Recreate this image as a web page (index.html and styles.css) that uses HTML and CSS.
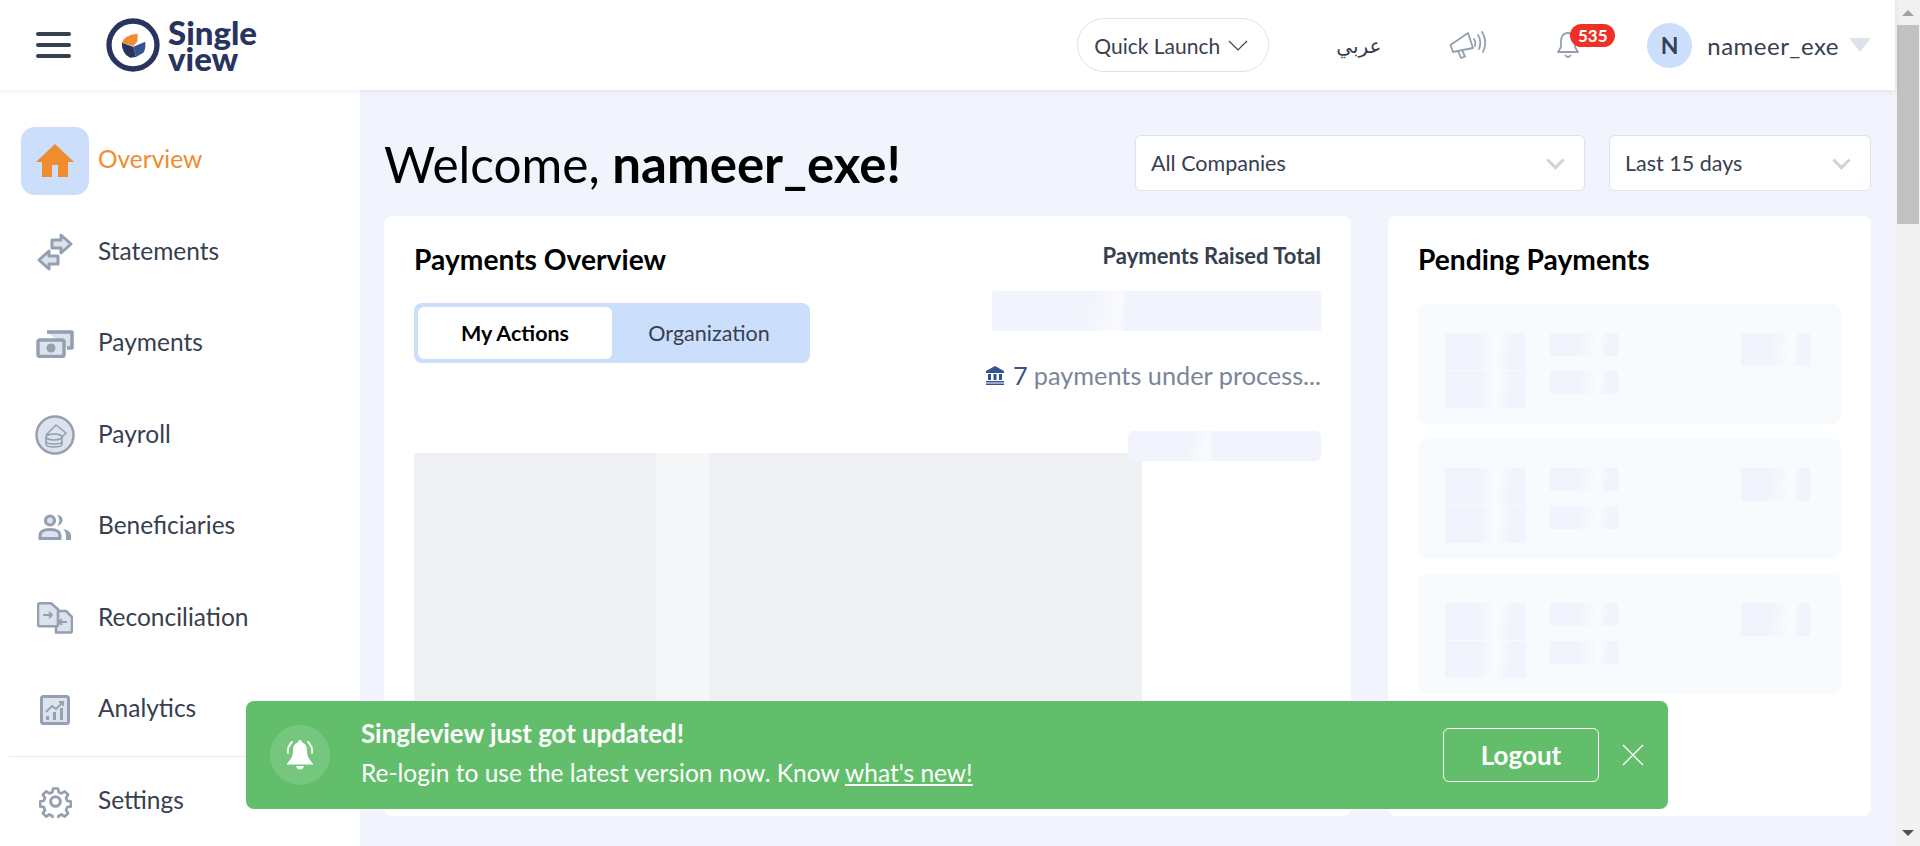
FILE: index.html
```html
<!DOCTYPE html>
<html lang="en">
  <head>
    <meta charset="UTF-8" />
    <title>Singleview</title>
    <link rel="stylesheet" href="styles.css">
  </head>
  <body>
    <div class="page">
      <header class="topbar">
        <div class="menu-btn"><span></span><span></span><span></span></div>
        <div class="logo">
          <svg class="logo-mark" viewBox="0 0 54 54">
            <circle cx="27" cy="27" r="24" fill="none" stroke="#28335f" stroke-width="5.300"/>
            <path d="M15.700 24.700Q18 17 31.700 15.700L31.300 23.700L27.300 28Z" fill="#ef8c2f"/>
            <path d="M15.700 24.700L27.300 28.700L30 39L24 39.700Q16 36 15.700 24.700Z" fill="#28335f"/>
            <path d="M27.300 28.700L39.300 23.700Q40 31 37.300 34.700L30 39Z" fill="#34548f"/>
          </svg>
          <div class="logo-text"><span>Single</span><span>view</span></div>
        </div>
        <div class="quick-launch">
          Quick Launch
          <svg width="20" height="11" viewBox="0 0 20 11"><path d="M1 1l9 9 9-9" fill="none" stroke="#36404f" stroke-width="1.2"/></svg>
        </div>
        <div class="lang" lang="ar">عربي</div>
        <svg class="megaphone" width="39" height="28" viewBox="0 0 39 28" fill="none" stroke="#94a0b2" stroke-width="1.800">
          <path d="M1.500 14L19 2l5 15-20 4z" stroke-linejoin="round"/>
          <path d="M9 20l3 7 4-1.500-3-6.500"/>
          <path d="M25 8q2 3 1 7M29 4q4 6 1 14M33 1q6 9 1 20" stroke-linecap="round"/>
        </svg>
        <div class="notify">
          <svg width="26" height="30" viewBox="0 0 26 30" fill="none" stroke="#94a0b2" stroke-width="1.800">
            <path d="M13 3c-5 0-7 4-7 8v6l-3 5h20l-3-5v-6c0-4-2-8-7-8z" stroke-linejoin="round"/>
            <path d="M10 25q3 4 6 0"/>
          </svg>
          <span class="badge">535</span>
        </div>
        <div class="user">
          <span class="avatar">N</span>
          <span class="user-name">nameer_exe</span>
          <span class="user-caret"></span>
        </div>
      </header>

      <div class="body-row">
        <aside class="sidebar">
          <nav class="nav">
            <a class="nav-item active">
              <span class="nav-icon">
                <svg width="38" height="33" viewBox="0 0 38 33"><path d="M19 0L38 18H32V33H22V21H16V33H6V18H0Z" fill="#ef8c2f"/></svg>
              </span>
              <span class="nav-label">Overview</span>
            </a>
            <a class="nav-item">
              <span class="nav-icon">
                <svg width="36" height="38" viewBox="0 0 36 38" fill="#dde3ec" stroke="#94a0b2" stroke-width="3" stroke-linejoin="round">
                  <path d="M15 7h9V2l10 9-10 9v-5h-9z"/>
                  <path d="M21 23h-9v-5L2 27l10 9v-5h9z"/>
                </svg>
              </span>
              <span class="nav-label">Statements</span>
            </a>
            <a class="nav-item">
              <span class="nav-icon">
                <svg width="38" height="28" viewBox="0 0 38 28">
                  <path d="M11 2h25v16h-5" fill="#dde3ec" stroke="#94a0b2" stroke-width="3.500" stroke-linejoin="round"/>
                  <rect x="2" y="10" width="26" height="16.500" rx="2" fill="#dde3ec" stroke="#94a0b2" stroke-width="3.500"/>
                  <circle cx="15" cy="18" r="4.500" fill="#94a0b2"/>
                </svg>
              </span>
              <span class="nav-label">Payments</span>
            </a>
            <a class="nav-item">
              <span class="nav-icon">
                <svg width="40" height="40" viewBox="0 0 40 40">
                  <circle cx="20" cy="20" r="18.500" fill="#dde3ec" stroke="#94a0b2" stroke-width="2.500"/>
                  <path d="M11 20l10-10 10 8-6 6" fill="none" stroke="#94a0b2" stroke-width="1.600" stroke-linejoin="round"/>
                  <ellipse cx="19" cy="22" rx="8" ry="3" fill="#dde3ec" stroke="#94a0b2" stroke-width="1.600"/>
                  <path d="M11 22v7c0 4 16 4 16 0v-7M11 26c0 4 16 4 16 0" fill="none" stroke="#94a0b2" stroke-width="1.600"/>
                </svg>
              </span>
              <span class="nav-label">Payroll</span>
            </a>
            <a class="nav-item">
              <span class="nav-icon">
                <svg width="34" height="26" viewBox="0 0 34 26" fill="#94a0b2">
                  <circle cx="12" cy="6.500" r="4.500" fill="#dde3ec" stroke="#94a0b2" stroke-width="3.200"/>
                  <path d="M2 24.500v-3c0-4 4-6 10-6s10 2 10 6v3z" fill="#dde3ec" stroke="#94a0b2" stroke-width="3.200" stroke-linejoin="round"/>
                  <path d="M19 1c7 0 8 9 0 11 3-3 3-8 0-11zM25 15c5 1 8 3 8 7v4h-5v-4c0-3-1-5-3-7z"/>
                </svg>
              </span>
              <span class="nav-label">Beneficiaries</span>
            </a>
            <a class="nav-item">
              <span class="nav-icon">
                <svg width="36" height="32" viewBox="0 0 36 32" fill="#dde3ec" stroke="#94a0b2" stroke-width="2.600" stroke-linejoin="round">
                  <path d="M19 30.500h14q2 0 2-2V15l-6-6h-8q-2 0-2 2z"/>
                  <path d="M3 1.300h11l7 6v15q0 2-2 2H3q-2 0-2-2v-19q0-2 2-2z"/>
                  <path d="M6 13h9M12 10l3 3-3 3M30 20h-8M25 17l-3 3 3 3" fill="none" stroke-width="1.800"/>
                </svg>
              </span>
              <span class="nav-label">Reconciliation</span>
            </a>
            <a class="nav-item">
              <span class="nav-icon">
                <svg width="30" height="30" viewBox="0 0 30 30">
                  <rect x="1.500" y="1.500" width="27" height="27" rx="2" fill="#dde3ec" stroke="#94a0b2" stroke-width="3"/>
                  <path d="M6 17l6-6 4 3 7-7M19 7h4v4" fill="none" stroke="#94a0b2" stroke-width="1.800"/>
                  <path d="M6 21h3v4H6zM13 17h3v8h-3zM20 13h3v12h-3z" fill="#94a0b2"/>
                </svg>
              </span>
              <span class="nav-label">Analytics</span>
            </a>
            <a class="nav-item settings">
              <span class="nav-icon">
                <svg width="33" height="33" viewBox="0 0 24 24" fill="none" stroke="#94a0b2" stroke-width="2.200" stroke-linejoin="round">
                  <circle cx="12" cy="12" r="3.500"/>
                  <path d="M10 1.500h4l.6 3 2.300 1 2.600-1.700 2.700 2.800-1.700 2.500 1 2.400 3 .5v4l-3 .6-1 2.300 1.700 2.600-2.800 2.700-2.500-1.700-2.400 1-.5 3h-4l-.6-3-2.300-1-2.600 1.700-2.700-2.800 1.700-2.500-1-2.400-3-.5v-4l3-.6 1-2.300-1.700-2.600 2.800-2.700 2.500 1.700 2.400-1z" transform="translate(1.200 1.200) scale(.9)"/>
                </svg>
              </span>
              <span class="nav-label">Settings</span>
            </a>
          </nav>
        </aside>

        <main class="main">
          <div class="title-row">
            <h1 class="welcome">Welcome, <b>nameer_exe!</b></h1>
            <div class="select select-company">All Companies <i class="chev"></i></div>
            <div class="select select-range">Last 15 days <i class="chev"></i></div>
          </div>

          <div class="cards">
            <section class="card">
              <div class="overview-top">
                <div>
                  <h2 class="card-title">Payments Overview</h2>
                  <div class="toggle">
                    <span class="toggle-btn on">My Actions</span>
                    <span class="toggle-btn">Organization</span>
                  </div>
                </div>
                <div class="stats">
                  <div class="stats-label">Payments Raised Total</div>
                  <div class="skeleton sk-total"></div>
                  <div class="stats-process">
                    <svg width="20" height="20" viewBox="0 0 20 20" fill="#34548f">
                      <path d="M10 1l9 5v2H1V6zM3 9h3v6H3zM8.500 9h3v6h-3zM14 9h3v6h-3zM1 16h18v1.500H1zM1 18.500h18V20H1z"/>
                    </svg>
                    <span class="count">7</span> payments under process...
                  </div>
                  <div class="skeleton sk-small"></div>
                </div>
              </div>
              <div class="chart-placeholder"></div>
            </section>

            <section class="card">
              <h2 class="card-title">Pending Payments</h2>
              <div class="pending-list">
                <div class="pending-row">
                  <div class="sk-col"><div class="skeleton sk-a"></div><div class="skeleton sk-a"></div></div>
                  <div class="sk-col spaced"><div class="skeleton sk-b"></div><div class="skeleton sk-b"></div></div>
                  <div class="skeleton sk-c"></div>
                </div>
                <div class="pending-row">
                  <div class="sk-col"><div class="skeleton sk-a"></div><div class="skeleton sk-a"></div></div>
                  <div class="sk-col spaced"><div class="skeleton sk-b"></div><div class="skeleton sk-b"></div></div>
                  <div class="skeleton sk-c"></div>
                </div>
                <div class="pending-row">
                  <div class="sk-col"><div class="skeleton sk-a"></div><div class="skeleton sk-a"></div></div>
                  <div class="sk-col spaced"><div class="skeleton sk-b"></div><div class="skeleton sk-b"></div></div>
                  <div class="skeleton sk-c"></div>
                </div>
              </div>
            </section>
          </div>
        </main>
      </div>

      <!-- update toast -->
      <div class="toast">
        <span class="toast-icon">
          <svg width="30" height="32" viewBox="0 0 30 32" fill="#fff">
            <path d="M15 1c1 0 2 1 2 2.500 4 1 5 4 5 9 0 5 3 9 6 12v1H2v-1c3-3 6-7 6-12 0-5 1-8 5-9C13 2 14 1 15 1z"/>
            <path d="M11 27h8q-1 3.500-4 3.500T11 27z"/>
            <path d="M7 3Q2 8 3 14M23 3q5 5 4 11" fill="none" stroke="#fff" stroke-width="1.800" stroke-linecap="round"/>
          </svg>
        </span>
        <div class="toast-text">
          <div class="toast-title">Singleview just got updated!</div>
          <div class="toast-msg">Re-login to use the latest version now. Know <a class="toast-link">what's new!</a></div>
        </div>
        <button class="toast-btn">Logout</button>
        <svg class="toast-close" width="22" height="22" viewBox="0 0 22 22"><path d="M1 1l20 20M21 1L1 21" stroke="#fff" stroke-width="1.400"/></svg>
      </div>
    </div>

    <div class="scrollbar">
      <span class="arrow up"></span>
      <div class="thumb"></div>
      <span class="arrow down"></span>
    </div>
  </body>
</html>
```

FILE: styles.css
```css
* {
  box-sizing: border-box;
}
html, body {
  height: 846px;
  overflow: hidden;
}
body {
  margin: 0;
  display: flex;
  font-family: "Lato", "DejaVu Sans", sans-serif;
  color: #36404f;
  background-color: #f1f4fc;
}
.page {
  flex: 1;
  position: relative;
  display: flex;
  flex-direction: column;
  min-width: 0;
}

/* top bar */
.topbar {
  height: 90px;
  flex: none;
  display: flex;
  align-items: center;
  padding: 0 24px 0 36px;
  background-color: #fff;
  box-shadow: 0 1px 6px rgba(60, 70, 110, 0.1);
  position: relative;
  z-index: 2;
}
.menu-btn {
  width: 35px;
  display: flex;
  flex-direction: column;
  gap: 7px;
}
.menu-btn span {
  height: 4px;
  border-radius: 2px;
  background-color: #36404f;
}
.logo {
  display: flex;
  align-items: center;
  margin-left: 35px;
  gap: 8px;
}
.logo-mark {
  width: 54px;
  height: 54px;
}
.logo-text {
  font-size: 33px;
  font-weight: 900;
  color: #28335f;
}
.logo-text span {
  display: block;
  height: 26px;
  line-height: 26px;
}
.quick-launch {
  margin-left: auto;
  width: 192px;
  height: 54px;
  display: flex;
  align-items: center;
  justify-content: center;
  gap: 8px;
  padding-right: 4px;
  font-size: 21px;
  border: 1px solid #dde3ec;
  border-radius: 27px;
}
.lang {
  margin-left: 67px;
  font-size: 20px;
  width: 44px;
  text-align: center;
}
.megaphone {
  margin-left: 69px;
}
.notify {
  margin-left: 67px;
  position: relative;
  width: 26px;
  height: 30px;
}
.badge {
  position: absolute;
  left: 15px;
  top: -6px;
  width: 45px;
  height: 23px;
  border-radius: 12px;
  background-color: #ee3124;
  color: #fff;
  font-size: 17px;
  font-weight: 700;
  line-height: 23px;
  text-align: center;
}
.user {
  margin-left: 66px;
  display: flex;
  align-items: center;
}
.avatar {
  width: 45px;
  height: 45px;
  border-radius: 50%;
  background-color: #cbdefc;
  font-size: 23px;
  font-weight: 700;
  line-height: 45px;
  text-align: center;
}
.user-name {
  margin-left: 15px;
  font-size: 24px;
  letter-spacing: 0.5px;
}
.user-caret {
  margin-left: 10px;
  width: 0;
  height: 0;
  border-left: 11px solid transparent;
  border-right: 11px solid transparent;
  border-top: 14px solid #dde3ec;
}

.body-row {
  flex: 1;
  display: flex;
  min-height: 0;
}

/* sidebar */
.sidebar {
  width: 360px;
  flex: none;
  background-color: #fff;
}
.nav {
  padding: 25px 0 0 9px;
}
.nav-item {
  height: 91.5px;
  display: flex;
  align-items: center;
  gap: 9px;
  font-size: 24.5px;
  color: #36404f;
}
.nav-label {
  margin-bottom: 4px;
}
.nav-icon {
  width: 68px;
  height: 68px;
  margin-left: 12px;
  display: flex;
  align-items: center;
  justify-content: center;
  border-radius: 14px;
}
.nav-item.active {
  color: #ef8c2f;
}
.nav-item.active .nav-icon {
  background-color: #cbdefc;
}
.nav-item.settings {
  border-top: 1px solid #e8eaee;
}

/* main */
.main {
  flex: 1;
  min-width: 0;
  padding: 45px 24px 0 24px;
}
.title-row {
  display: flex;
  align-items: center;
  height: 56px;
}
.welcome {
  margin: 0 auto 0 0;
  font-size: 49.5px;
  font-weight: 400;
  color: #000;
}
.welcome b {
  font-size: 51px;
  font-weight: 700;
}
.select {
  height: 56px;
  display: flex;
  align-items: center;
  justify-content: space-between;
  padding: 0 20px 0 15px;
  font-size: 21.500px;
  background-color: #fff;
  border: 1px solid #dde3ec;
  border-radius: 6px;
}
.select-company {
  width: 450px;
}
.select-range {
  width: 262px;
  margin-left: 24px;
}
.chev {
  width: 13px;
  height: 13px;
  margin-top: -6px;
  margin-right: 2px;
  border-right: 3px solid #d0d3d8;
  border-bottom: 3px solid #d0d3d8;
  transform: rotate(45deg);
}

.cards {
  margin-top: 25px;
  display: grid;
  grid-template-columns: 967px 483px;
  gap: 37px;
}
.card {
  height: 600px;
  padding: 30px;
  background-color: #fff;
  border-radius: 8px;
}
.card-title {
  margin: 0;
  font-size: 28.200px;
  font-weight: 700;
  line-height: 26px;
  color: #000;
}

.overview-top {
  height: 207px;
  display: flex;
  justify-content: space-between;
}
.toggle {
  margin-top: 31px;
  width: 396px;
  height: 60px;
  padding: 4px;
  display: flex;
  background-color: #cbdefc;
  border-radius: 8px;
}
.toggle-btn {
  flex: 1;
  display: flex;
  align-items: center;
  justify-content: center;
  font-size: 21.500px;
}
.toggle-btn.on {
  flex: none;
  width: 194px;
  background-color: #fff;
  border-radius: 6px;
  font-weight: 700;
  color: #000;
}
.stats {
  position: relative;
  width: 329px;
  display: flex;
  flex-direction: column;
  align-items: flex-end;
}
.stats-label {
  font-size: 22px;
  font-weight: 700;
  line-height: 20px;
  flex: none;
}
.stats-process {
  flex: none;
  margin-top: 25px;
  display: flex;
  align-items: center;
  gap: 8px;
  font-size: 25.300px;
  line-height: 38px;
  color: #7a8699;
  white-space: nowrap;
}
.count {
  color: #34548f;
  margin-right: -2px;
}

.skeleton {
  flex: none;
  background-color: #f1f4fc;
  background-repeat: no-repeat;
}
.sk-total {
  margin-top: 25px;
  width: 329px;
  height: 40px;
  background-image: linear-gradient(100deg, transparent 68%, #f9fafe 92%, #f5f7fd 100%);
  background-size: 40.400% 100%;
  border-radius: 4px 4px 0 0;
}
.sk-small {
  margin-top: 37px;
  width: 193px;
  height: 30px;
  background-image: linear-gradient(100deg, transparent 68%, #f9fafe 92%, #f5f7fd 100%);
  background-size: 43.500% 100%;
  border-radius: 6px;
}
.chart-placeholder {
  width: 728px;
  height: 290px;
  background: linear-gradient(90deg, #eff0f3 33.200%, #f5f6f8 33.200%, #f5f6f8 40.600%, #eff0f3 40.600%);
}

.pending-list {
  margin-top: 32px;
  display: flex;
  flex-direction: column;
  gap: 15px;
}
.pending-row {
  height: 120px;
  padding: 29px 31px 0 27px;
  display: flex;
  align-items: flex-start;
  background-color: #f8fbfd;
  border-radius: 8px;
}
.sk-col {
  display: flex;
  flex-direction: column;
  gap: 1px;
}
.sk-col.spaced {
  margin-left: 24px;
  gap: 15px;
}
.sk-a {
  width: 81px;
  height: 37px;
  background-image: linear-gradient(95deg, transparent 43%, #fafbfe 62%, transparent 80%);
}
.sk-b {
  width: 68px;
  height: 23px;
  background-image: linear-gradient(95deg, transparent 40%, #fafbfe 72%, transparent 84%);
}
.sk-c {
  margin-left: auto;
  width: 69px;
  height: 33px;
  background-image: linear-gradient(95deg, transparent 40%, #fafbfe 75%, transparent 83%);
}

/* toast sits over the page */
.toast {
  position: absolute;
  left: 246px;
  top: 701px;
  width: 1422px;
  height: 108px;
  display: flex;
  align-items: center;
  padding: 0 24px 0 24px;
  background-color: #62be6b;
  border-radius: 8px;
  color: #fff;
  z-index: 3;
}
.toast-icon {
  width: 60px;
  height: 60px;
  flex: none;
  display: flex;
  align-items: center;
  justify-content: center;
  border-radius: 50%;
  background-color: #76c77e;
}
.toast-text {
  flex: 1;
  margin: -2px 0 0 31px;
}
.toast-title {
  font-size: 25.800px;
  font-weight: 700;
  line-height: 37px;
}
.toast-msg {
  font-size: 24.500px;
  line-height: 41px;
}
.toast-link {
  text-decoration: underline;
}
.toast-btn {
  width: 156px;
  height: 54px;
  margin-left: -1px;
  background: none;
  border: 1px solid #fff;
  border-radius: 6px;
  color: #fff;
  font-family: inherit;
  font-size: 26px;
  font-weight: 700;
}
.toast-close {
  margin-left: 23px;
}

/* drawn scrollbar */
.scrollbar {
  width: 25px;
  flex: none;
  display: flex;
  flex-direction: column;
  padding: 0 1px 0 2px;
  background-color: #f1f1f1;
}
.arrow {
  height: 25px;
  flex: none;
  position: relative;
}
.arrow::after {
  content: "";
  position: absolute;
  left: 5px;
  border-left: 6px solid transparent;
  border-right: 6px solid transparent;
}
.arrow.up::after {
  top: 10px;
  border-bottom: 6px solid #a3a3a3;
}
.arrow.down {
  margin-top: auto;
}
.arrow.down::after {
  top: 9px;
  border-top: 6px solid #505050;
}
.thumb {
  height: 199px;
  background-color: #c1c1c1;
}
```
